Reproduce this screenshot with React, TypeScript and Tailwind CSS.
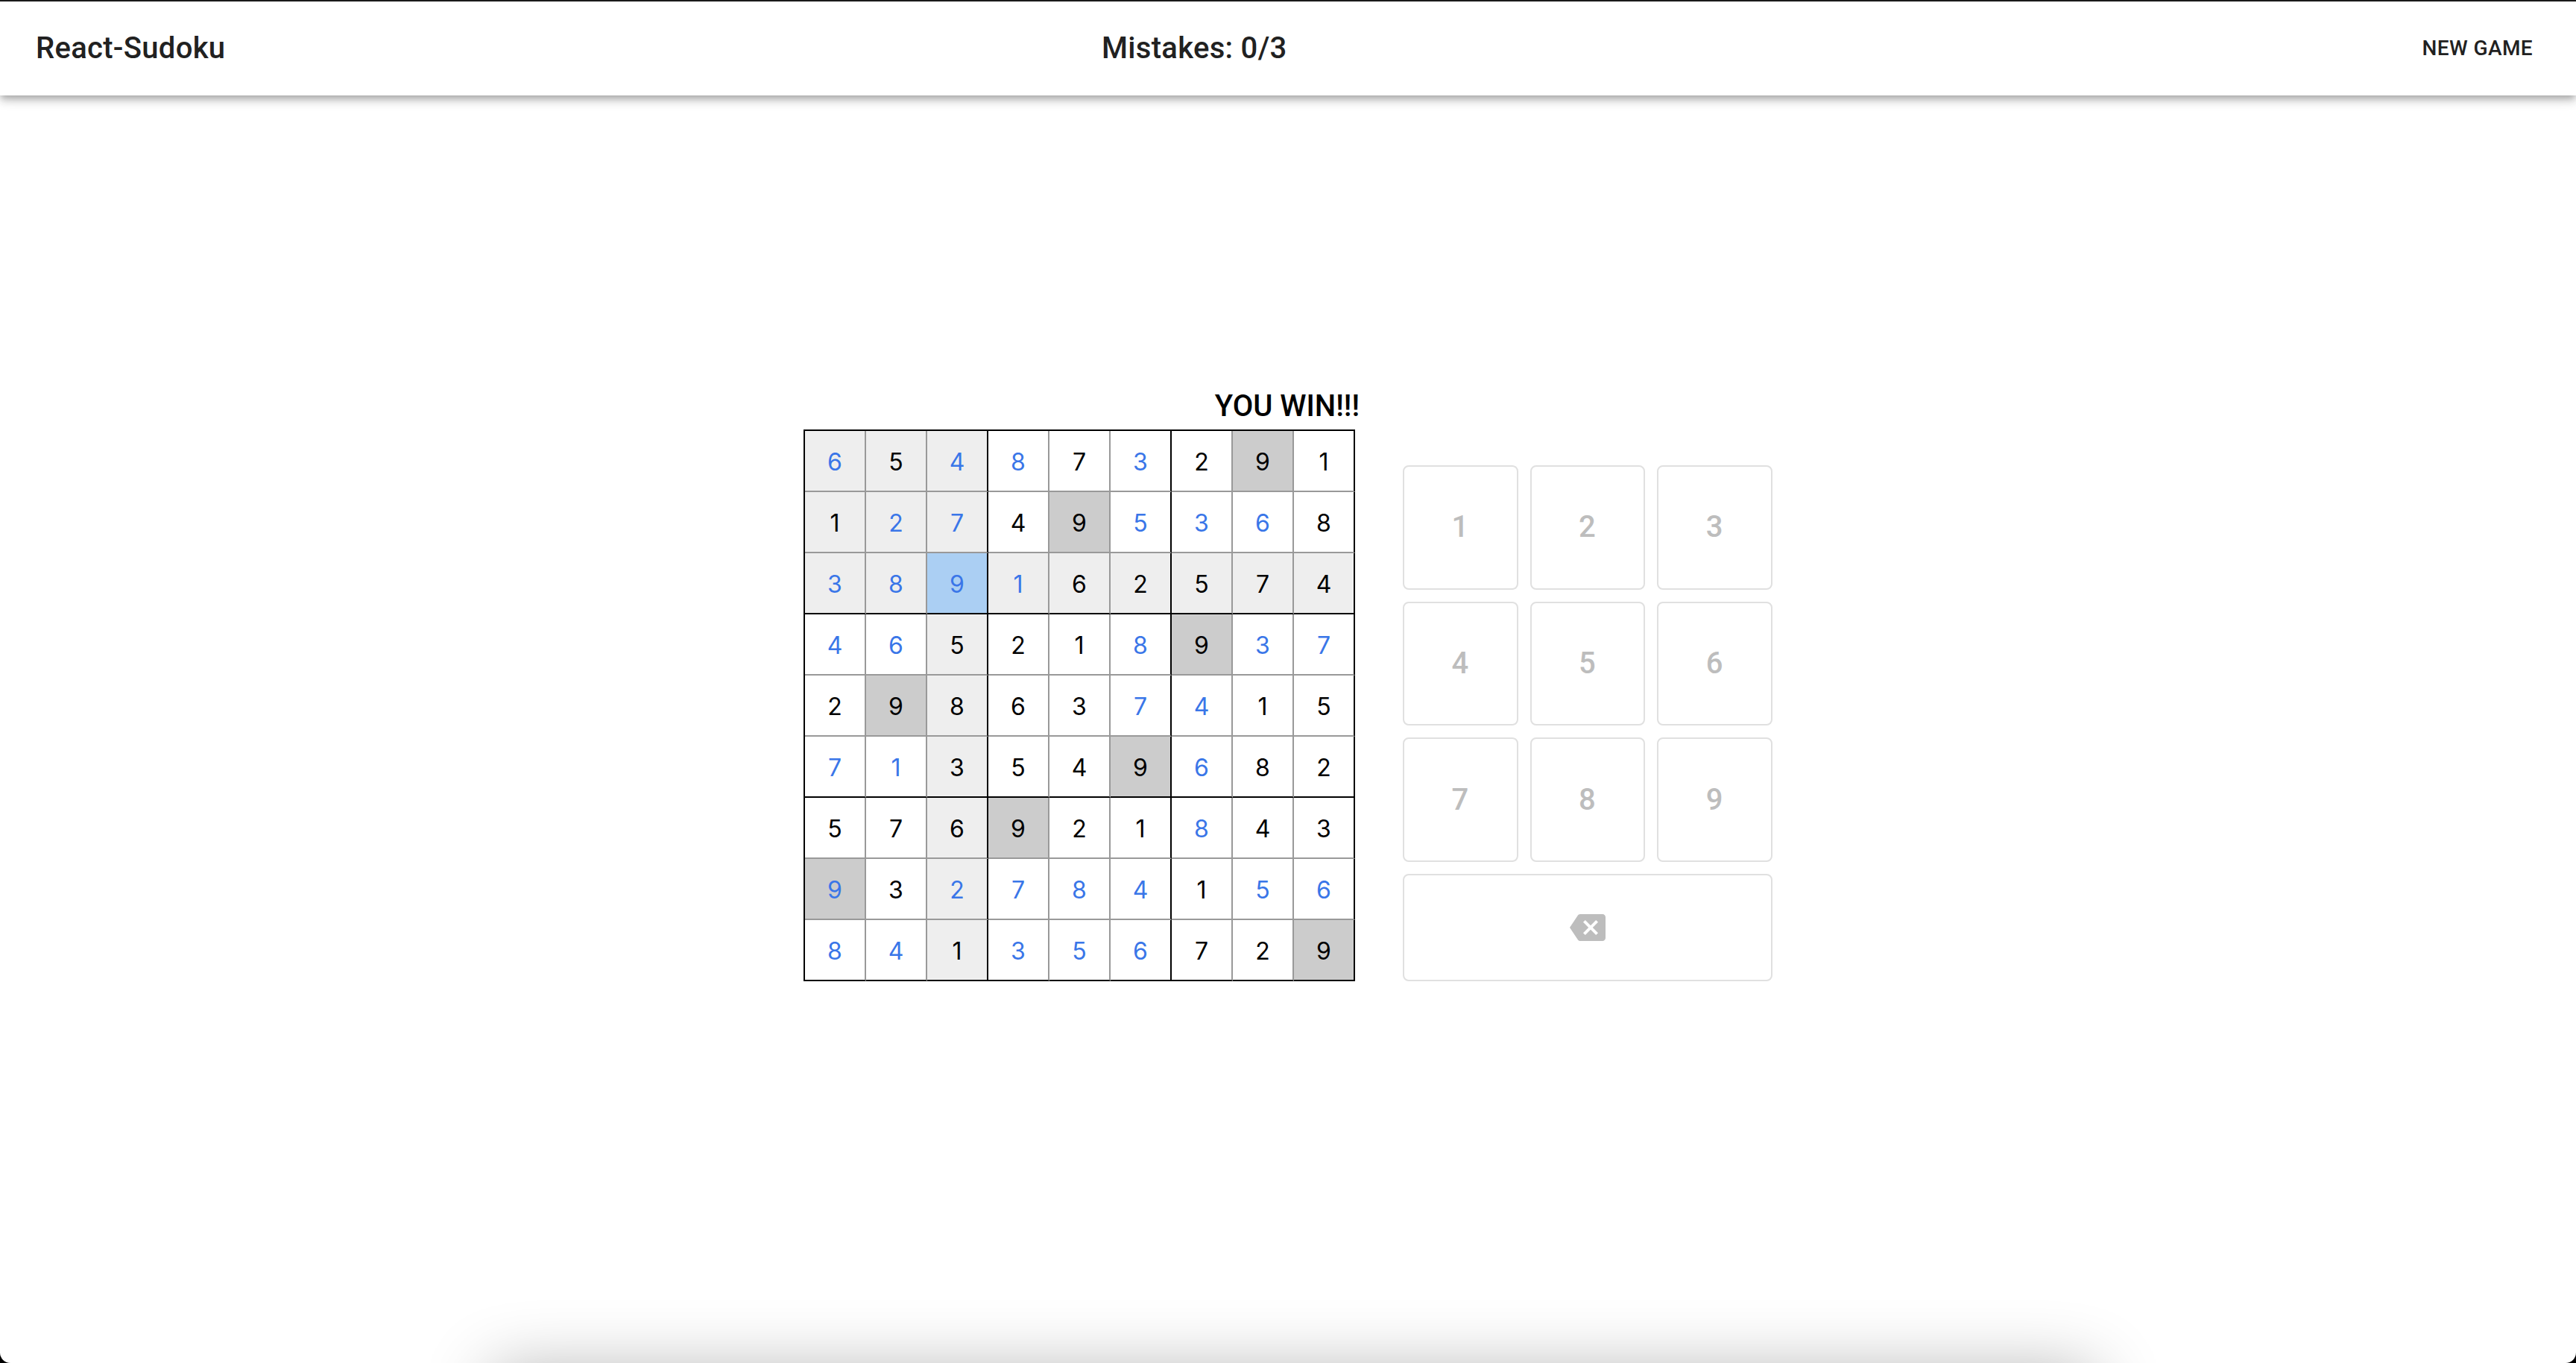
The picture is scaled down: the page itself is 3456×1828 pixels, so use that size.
const rows = [
  "6b 5 4b 8b 7 3b 2 9 1",
  "1 2b 7b 4 9 5b 3b 6b 8",
  "3b 8b 9b 1b 6 2 5 7 4",
  "4b 6b 5 2 1 8b 9 3b 7b",
  "2 9 8 6 3 7b 4b 1 5",
  "7b 1b 3 5 4 9 6b 8 2",
  "5 7 6 9 2 1 8b 4 3",
  "9b 3 2b 7b 8b 4b 1 5b 6b",
  "8b 4b 1 3b 5b 6b 7 2 9",
].map((r) => r.split(" "));

function cellBg(r: number, c: number, v: string) {
  if (r === 2 && c === 2) return "bg-[#abcff3]";
  if (v === "9") return "bg-[#cccccc]";
  if (r === 2 || c === 2 || (r < 3 && c < 3)) return "bg-[#eeeeee]";
  return "bg-white";
}

function Cell({ r, c, token }: { r: number; c: number; token: string }) {
  const v = token[0];
  const blue = token.length > 1;
  return (
    <div
      className={`flex h-[82px] w-[82px] items-center justify-center border-r-2 border-b-2 pt-1 text-[32px] ${cellBg(r, c, v)} ${
        c % 3 === 2 ? "border-r-black" : "border-r-[#999999]"
      } ${r % 3 === 2 ? "border-b-black" : "border-b-[#999999]"} ${blue ? "text-[#3a76e8]" : "text-black"}`}
    >
      {v}
    </div>
  );
}

function Key({ label }: { label: string }) {
  return (
    <div className="flex h-[166.67px] items-center justify-center rounded-lg border-2 border-[#e0e0e0] font-['Roboto',sans-serif] text-[40px] font-medium tracking-[1.1px] text-[#bdbdbd]">
      {label}
    </div>
  );
}

export default function App() {
  return (
    <div className="relative h-[1828px] w-[3456px] overflow-hidden bg-white font-['Inter',sans-serif]">
      <header className="relative flex h-[128px] items-center border-t-2 border-t-[#1a1a1a] bg-white pl-12 pr-[42px] font-['Roboto',sans-serif] text-[#212121] shadow-[0_4px_8px_-2px_rgba(0,0,0,0.2),0_8px_10px_0_rgba(0,0,0,0.14),0_2px_20px_0_rgba(0,0,0,0.12)]">
        <div className="w-[1430px] text-[40px] font-medium leading-[60px] tracking-[0.3px]">React-Sudoku</div>
        <div className="text-[40px] font-medium leading-[60px] tracking-[0.3px]">Mistakes: 0/3</div>
        <button className="ml-auto px-4 py-3 text-[28px] font-medium uppercase leading-[40px] tracking-[0.4px]">
          New Game
        </button>
      </header>

      <main className="flex items-end justify-center pt-[386px]">
        <div className="w-[746px]">
          <div className="text-right font-['Roboto',sans-serif] text-[40px] font-medium leading-[62px] text-black">
            YOU WIN!!!
          </div>
          <div className="w-[740px] border-t-2 border-l-2 border-black">
            <div className="grid grid-cols-[repeat(9,82px)]">
              {rows.map((row, r) => row.map((t, c) => <Cell key={`${r}-${c}`} r={r} c={c} token={t} />))}
            </div>
          </div>
        </div>
        <div className="ml-[58px] w-[496px]">
          <div className="grid grid-cols-3 gap-4">
            {["1", "2", "3", "4", "5", "6", "7", "8", "9"].map((n) => (
              <Key key={n} label={n} />
            ))}
            <div className="col-span-3 flex h-[144px] items-center justify-center rounded-lg border-2 border-[#e0e0e0]">
              <svg viewBox="0 0 24 24" className="h-12 w-12 fill-[#bdbdbd]">
                <path d="M22 3H7c-.69 0-1.23.35-1.59.88L0 12l5.41 8.11c.36.53.9.89 1.59.89h15c1.1 0 2-.9 2-2V5c0-1.1-.9-2-2-2zm-3 12.59L17.59 17 14 13.41 10.41 17 9 15.59 12.59 12 9 8.41 10.41 7 14 10.59 17.59 7 19 8.41 15.41 12 19 15.59z" />
              </svg>
            </div>
          </div>
        </div>
      </main>

      <div className="absolute left-[680px] top-[1858px] h-[100px] w-[2110px] shadow-[0_0_90px_20px_rgba(0,0,0,0.3)]" />
      <div className="pointer-events-none absolute inset-0 rounded-b-[14px] shadow-[0_0_0_30px_#000]" />
    </div>
  );
}
